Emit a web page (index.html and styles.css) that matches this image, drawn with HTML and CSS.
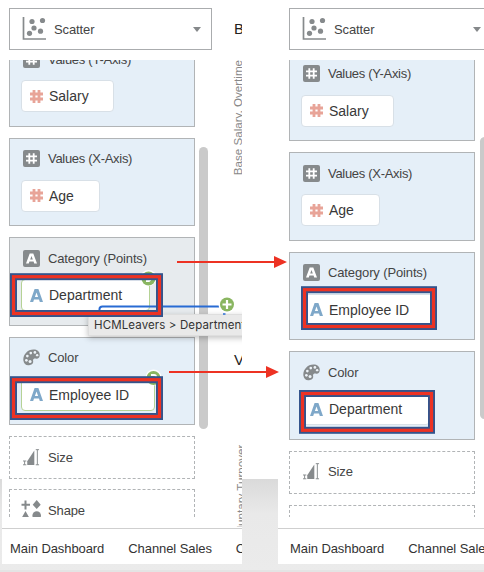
FILE: index.html
```html
<!DOCTYPE html>
<html lang="en">
<head>
<meta charset="utf-8">
<title>Scatter configuration</title>
<link rel="stylesheet" href="styles.css">
</head>
<body>
<svg class="defs" width="0" height="0">
  <symbol id="scatter" viewBox="0 0 24 24"><path d="M1.500 1V23H24" fill="none" stroke="#868a8c" stroke-width="1.700"/><g fill="#868a8c"><circle cx="10" cy="5.500" r="2.600"/><circle cx="20.500" cy="4.500" r="2.600"/><circle cx="12" cy="12" r="2.600"/><circle cx="7.500" cy="17.300" r="2.600"/><circle cx="18.500" cy="15.200" r="2.600"/></g></symbol>
  <symbol id="num" viewBox="0 0 17 17"><rect width="17" height="17" rx="2" fill="#868a8c"/><path d="M6.300 3.200v10.600M10.700 3.200v10.600M3 6.300h11M3 10.700h11" stroke="#fff" stroke-width="1.800"/></symbol>
  <symbol id="attr" viewBox="0 0 17 17"><rect width="17" height="17" rx="2" fill="#868a8c"/><path fill-rule="evenodd" fill="#fff" d="M6.700 3.500h3.600l3.700 10h-2.800l-.6-1.900H6.400l-.6 1.900H3zM8.500 5.900 7.200 9.600h2.600z"/></symbol>
  <symbol id="hash" viewBox="0 0 13 13"><path d="M4 0v13M9 0v13M0 4h13M0 9h13" stroke="#e8a498" stroke-width="2.800"/></symbol>
  <symbol id="letter" viewBox="0 0 13 13"><path fill-rule="evenodd" fill="#7fa8c9" d="M4.600 0h3.800L13 13H9.800L9 10.600H4L3.200 13H0zM6.500 3.600 4.900 8.100h3.200z"/></symbol>
  <symbol id="palette" viewBox="0 0 18 18"><path fill="#868a8c" d="M11.500.5C4.500.2-.3 6.500.4 12.200c.5 4 3.600 5.800 7 4.700 3-1 3.700-2.400 3.300-4.500-.4-2.200 1.400-2.600 3.500-2.200 2.600.5 3.700-1.900 3.500-4.600C17.500 2.200 14.700.6 11.500.5z"/><g fill="#edf3f8"><circle cx="8.200" cy="4.300" r="1.400"/><circle cx="12.600" cy="3.600" r="1.400"/><circle cx="4.600" cy="7.500" r="1.400"/><circle cx="3.600" cy="12" r="1.400"/><circle cx="7.500" cy="13.300" r="1.600"/><circle cx="15" cy="6.500" r="1.300"/></g></symbol>
  <symbol id="size" viewBox="0 0 18 18"><path d="M4.500 17v-4L12 1.500V17z" fill="#868a8c"/><path d="M13.500.7H17M15.200.7v16M13.500 16.700H17M0 12.700h3.500M1.700 12.700v4M0 16.700h3.500" stroke="#868a8c" fill="none"/></symbol>
  <symbol id="shape" viewBox="0 0 20 20"><g fill="#868a8c"><path d="M3.500.5h2v3.300h3.500v2H5.500v3.700h-2V5.800H.5v-2h3z"/><path d="M15.700 0l4 4.700-4 4.300-4-4.300zM4.500 11 9 19H0z"/><circle cx="15.700" cy="15.500" r="4.300"/></g></symbol>
</svg>
<main class="board">
  <section class="shot shot-before">
    <header class="picker"><svg class="i24"><use href="#scatter"/></svg><span>Scatter</span><i class="caret"></i></header>
    <div class="list">
      <article class="card"><h2><svg class="i17"><use href="#num"/></svg><span class="tight">Values (Y-Axis)</span></h2><div class="pill w-salary"><svg><use href="#hash"/></svg>Salary</div></article>
      <article class="card"><h2><svg class="i17"><use href="#num"/></svg><span class="tight">Values (X-Axis)</span></h2><div class="pill w-age"><svg><use href="#hash"/></svg>Age</div></article>
      <article class="card target"><h2><svg class="i17"><use href="#attr"/></svg><span>Category (Points)</span></h2><div class="pill green w-dept"><svg><use href="#letter"/></svg>Department</div></article>
      <article class="card"><h2><svg class="i17"><use href="#palette"/></svg><span>Color</span></h2><div class="pill green w-emp"><svg><use href="#letter"/></svg>Employee ID</div></article>
      <article class="card empty"><h2><svg class="i17"><use href="#size"/></svg><span>Size</span></h2></article>
      <article class="card empty shape"><h2><svg class="i17 wide"><use href="#shape"/></svg><span>Shape</span></h2></article>
    </div>
    <footer class="tabs"><span>Main Dashboard</span><span>Channel Sales</span><span>C</span></footer>
    <i class="thumb"></i>
    <b class="side-title t-b">B</b><b class="side-title t-v">V</b>
    <span class="axis axis-salary">Base Salary, Overtime</span>
    <span class="axis axis-turnover">Voluntary Turnover</span>
    <div class="tooltip">HCMLeavers &gt; Department</div>
  </section>
  <section class="shot shot-after">
    <header class="picker"><svg class="i24"><use href="#scatter"/></svg><span>Scatter</span><i class="caret"></i></header>
    <div class="list">
      <article class="card"><h2><svg class="i17"><use href="#num"/></svg><span class="tight">Values (Y-Axis)</span></h2><div class="pill w-salary"><svg><use href="#hash"/></svg>Salary</div></article>
      <article class="card"><h2><svg class="i17"><use href="#num"/></svg><span class="tight">Values (X-Axis)</span></h2><div class="pill w-age"><svg><use href="#hash"/></svg>Age</div></article>
      <article class="card"><h2><svg class="i17"><use href="#attr"/></svg><span>Category (Points)</span></h2><div class="pill w-emp"><svg><use href="#letter"/></svg>Employee ID</div></article>
      <article class="card"><h2><svg class="i17"><use href="#palette"/></svg><span>Color</span></h2><div class="pill w-dept"><svg><use href="#letter"/></svg>Department</div></article>
      <article class="card empty"><h2><svg class="i17"><use href="#size"/></svg><span>Size</span></h2></article>
      <article class="card empty"></article>
    </div>
    <footer class="tabs"><span>Main Dashboard</span><span>Channel Sales</span></footer>
    <i class="thumb"></i>
  </section>
  <svg class="marks" viewBox="0 0 484 572">
    <circle cx="148.500" cy="278" r="8" fill="#fff"/><circle cx="148.500" cy="278.500" r="7" fill="#8ab661"/><path d="M145 276h4a3 3 0 0 1 0 5h-3" stroke="#fff" stroke-width="2" fill="none"/>
    <circle cx="153.500" cy="377.500" r="8" fill="#fff"/><circle cx="153.500" cy="378" r="7" fill="#8ab661"/><path d="M151 375h3a2 2 0 0 1 0 4" stroke="#fff" stroke-width="2" fill="none"/>
    <path d="M99.500 310v-1q0-2.500 3-2.500H219" stroke="#286bd3" stroke-width="2" fill="none"/>
    <path d="M223 314h2.500" stroke="#286bd3" stroke-width="1.500"/>
    <circle cx="227" cy="304.500" r="8.500" fill="#fff"/><circle cx="227" cy="304.500" r="7" fill="#8ab661"/><path d="M222.500 304.500h9M227 300v9" stroke="#fff" stroke-width="2.200"/>
    <g fill="none" stroke="#34548c" stroke-width="7">
      <rect x="13.500" y="276.700" width="146" height="36.800"/><rect x="13.500" y="379.700" width="146" height="36.800"/>
      <rect x="304.500" y="289.700" width="129" height="36.800"/><rect x="302.500" y="393.500" width="129" height="36.800"/>
    </g>
    <g fill="none" stroke="#ed3223" stroke-width="3.200">
      <rect x="13.500" y="276.700" width="146" height="36.800"/><rect x="13.500" y="379.700" width="146" height="36.800"/>
      <rect x="304.500" y="289.700" width="129" height="36.800"/><rect x="302.500" y="393.500" width="129" height="36.800"/>
    </g>
    <path d="M177 262H275M169 372H267" stroke="#ed3223" stroke-width="1.800"/>
    <path d="M274 256l13 6-13 6zM266 366l13 6-13 6z" fill="#ed3223"/>
  </svg>
</main>
</body>
</html>
```
FILE: styles.css
```css
* { box-sizing: border-box; }
body { margin: 0; overflow: hidden; background: #fff; font-family: "Liberation Sans", Arial, sans-serif; color: #444; }
.defs { position: absolute; }
.board {
  position: relative; display: flex; gap: 36px; width: 484px; height: 572px; padding-left: 2px; overflow: hidden;
  background: linear-gradient(#fff 479px, #dadada 479px, #e9e9e9 514px, #ebebeb 570px, #e4e4e4 570px);
}
.shot { position: relative; flex: none; display: flex; flex-direction: column; height: 564px; overflow: hidden; background: #fff; }
.shot-before { width: 240px; padding: 8px 0 0 7px; }
.shot-after { width: 206px; padding: 8px 0 0 11px; }
.picker {
  flex: none; display: flex; align-items: center; width: 203px; height: 42px; padding: 0 10px 0 12px;
  border: 1px solid #aaacae; font-size: 13px; letter-spacing: -.1px;
}
.picker span { flex: 1; margin-left: 8px; }
.i24 { width: 24px; height: 24px; margin-top: -2px; }
.caret { border: 4px solid transparent; border-top: 5px solid #85888a; border-bottom: 0; }
.list { flex: none; display: flex; flex-direction: column; gap: 11px; height: 457px; margin-top: 10px; overflow: hidden; }
.card { flex: none; width: 186px; height: 88.500px; padding: 11px 11px 0; border: 1px solid #b1b4b6; background: #e5eff8; }
.card:first-child { margin-top: -22px; }
.shot-after .card:first-child { margin-top: -7.500px; }
.target { background: #e7ebee; }
.empty { height: 43px; padding-left: 12px; background: #fff; border-style: dashed; }
.shape { margin-top: -1px; }
h2 { display: flex; align-items: center; gap: 8px; height: 18px; margin: 0 0 12px 2px; font-size: 13px; font-weight: 400; letter-spacing: -.13px; white-space: nowrap; }
.empty h2 { margin-left: 1px; }
.tight { letter-spacing: -.3px; }
.i17 { flex: none; width: 17px; height: 17px; }
.wide { width: 20px; height: 20px; margin: 0 -1px 0 -2px; }
.pill {
  display: flex; align-items: center; gap: 6px; height: 32px; padding-left: 8px;
  border: 1px solid #d8e0e7; border-radius: 4px; background: #fff; color: #383838; font-size: 14px; white-space: nowrap;
}
.pill svg { flex: none; width: 13px; height: 13px; }
.green { border-color: #b5d295; }
.w-salary { width: 93px; }
.w-age { width: 79px; }
.w-dept { width: 129px; }
.w-emp { width: 134px; }
.tabs {
  flex: none; display: flex; align-items: center; gap: 24px; height: 36px; margin: 11px 0 0 -11px; padding: 3px 0 0 12px;
  border-top: 1px solid #cfcfcf; font-size: 13px; letter-spacing: -.08px; white-space: nowrap; color: #333;
}
.shot-before .tabs { margin-left: -7px; padding-left: 8px; }
.thumb { position: absolute; left: 197px; top: 147px; width: 9px; height: 282px; border-radius: 5px; background: #cacaca; }
.shot-after .thumb { left: 202px; top: 137px; }
.side-title { position: absolute; left: 232px; color: #222; font-size: 15px; font-weight: 400; }
.t-b { top: 20px; }
.t-v { top: 351px; }
.axis { position: absolute; left: 229px; writing-mode: vertical-rl; transform: rotate(180deg); color: #888; font-size: 11.600px; line-height: 14px; white-space: nowrap; }
.axis-salary { top: 60px; }
.axis-turnover { left: 232px; top: 445px; height: 82px; overflow: hidden; direction: rtl; }
.tooltip {
  position: absolute; left: 86px; top: 314px; width: 170px; height: 22px; padding-left: 5px; background: #e9e9e9;
  border: 1px solid #dedede; box-shadow: 0 2px 6px rgba(0,0,0,.25);
  font: 11.500px/21px Inter, sans-serif; letter-spacing: .12px; color: #333; white-space: nowrap;
}
.marks { position: absolute; left: 0; top: 0; width: 484px; height: 572px; }
```
